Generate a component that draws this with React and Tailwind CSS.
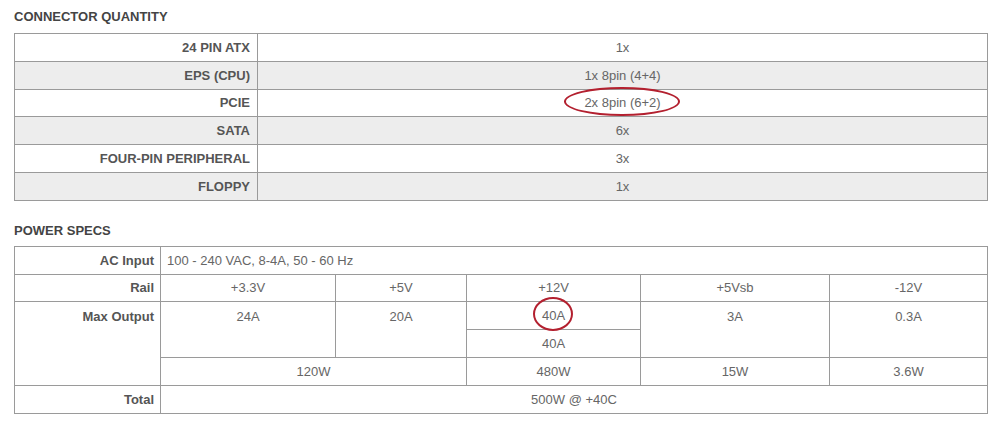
import React from "react";

const th = "border border-[#9a9a9a] text-right font-bold text-[#555] pr-[7px] h-[27.8px] p-0";
const td = "border border-[#9a9a9a] text-center text-[#666] h-[27.8px] p-0";

function Ellipse({ className }) {
  return (
    <span
      className={
        "pointer-events-none absolute rounded-[50%] border-2 border-[#b3202f] " + className
      }
    />
  );
}

export default function App() {
  const conn = [
    ["24 PIN ATX", "1x"],
    ["EPS (CPU)", "1x 8pin (4+4)"],
    ["PCIE", "2x 8pin (6+2)", true],
    ["SATA", "6x"],
    ["FOUR-PIN PERIPHERAL", "3x"],
    ["FLOPPY", "1x"],
  ];
  return (
    <div className="w-[1000px] h-[427px] bg-white font-['Liberation_Sans',Arial,sans-serif] text-[13px] leading-[15px]">
      <div className="pl-[14px] pt-[9px] h-[33px] text-[13px] font-bold text-[#444]">
        CONNECTOR QUANTITY
      </div>
      <table className="ml-[14px] w-[974px] table-fixed border-collapse">
        <colgroup>
          <col className="w-[243px]" />
          <col />
        </colgroup>
        <tbody>
          {conn.map(([k, v, mark], i) => (
            <tr key={k} className={i % 2 === 1 ? "bg-[#ededed]" : "bg-white"}>
              <th className={th}>{k}</th>
              <td className={td}>
                <span className="relative inline-block">
                  {v}
                  {mark && <Ellipse className="left-[-20px] right-[-19px] top-[-8px] bottom-[-6px]" />}
                </span>
              </td>
            </tr>
          ))}
        </tbody>
      </table>
      <div className="pl-[14px] pt-[22px] h-[45px] text-[13px] font-bold text-[#444]">
        POWER SPECS
      </div>
      <table className="ml-[14px] w-[974px] table-fixed border-collapse">
        <colgroup>
          <col className="w-[146px]" />
          <col className="w-[175px]" />
          <col className="w-[131px]" />
          <col className="w-[174px]" />
          <col className="w-[189px]" />
          <col />
        </colgroup>
        <tbody>
          <tr>
            <th className={th + " !pr-[6px]"}>AC Input</th>
            <td colSpan={5} className={td + " !text-left pl-[6px]"}>
              100 - 240 VAC, 8-4A, 50 - 60 Hz
            </td>
          </tr>
          <tr>
            <th className={th + " !pr-[6px]"}>Rail</th>
            <td className={td}>+3.3V</td>
            <td className={td}>+5V</td>
            <td className={td}>+12V</td>
            <td className={td}>+5Vsb</td>
            <td className={td}>-12V</td>
          </tr>
          <tr>
            <th rowSpan={3} className={th + " !pr-[6px] align-top pt-[7px]"}>Max Output</th>
            <td rowSpan={2} className={td + " align-top pt-[7px]"}>24A</td>
            <td rowSpan={2} className={td + " align-top pt-[7px]"}>20A</td>
            <td className={td}>
              <span className="relative inline-block">
                40A
                <Ellipse className="left-[-9px] right-[-8px] top-[-11px] bottom-[-8px]" />
              </span>
            </td>
            <td rowSpan={2} className={td + " align-top pt-[7px]"}>3A</td>
            <td rowSpan={2} className={td + " align-top pt-[7px]"}>0.3A</td>
          </tr>
          <tr>
            <td className={td}>40A</td>
          </tr>
          <tr>
            <td colSpan={2} className={td}>120W</td>
            <td className={td}>480W</td>
            <td className={td}>15W</td>
            <td className={td}>3.6W</td>
          </tr>
          <tr>
            <th className={th + " !pr-[6px]"}>Total</th>
            <td colSpan={5} className={td}>500W @ +40C</td>
          </tr>
        </tbody>
      </table>
    </div>
  );
}
